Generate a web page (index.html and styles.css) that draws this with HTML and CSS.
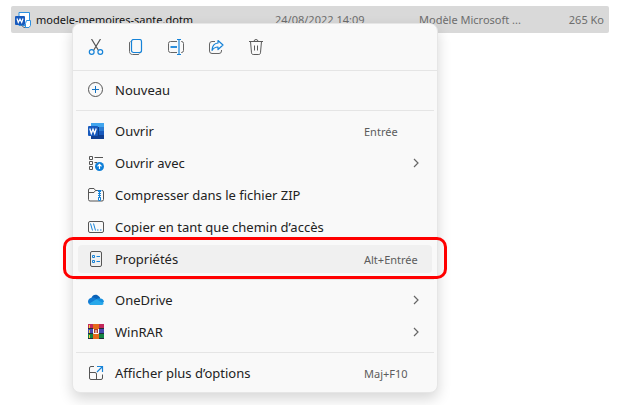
FILE: index.html
```html
<!DOCTYPE html>
<html lang="fr">

<head>
    <meta charset="UTF-8">
    <meta name="viewport" content="width=device-width, initial-scale=1.0">
    <title>Explorateur</title>
    <link rel="stylesheet" href="styles.css">
</head>

<body>
    <main class="explorer">
        <table class="files">
            <tbody>
                <tr>
                    <td class="file-name">
                        <div class="file-label">
                            <svg class="icon" viewBox="0 0 16 16">
                                <path d="M4 4V.5h10.500v13H4V11" fill="#fff" stroke="#2b8fe0" />
                                <path d="M5 12l4 3.500h5" fill="none" stroke="#5b6b80" />
                                <rect x="0" y="4" width="10" height="9" rx="1" fill="#185abd" />
                                <path d="M2 6.500l1.300 4L5 7l1.700 3.500L8 6.500" fill="none" stroke="#fff" stroke-width="1.200" />
                                <path d="M11.500 8.500h4v5l-1.500 2h-3.500v-4z" fill="#fff" stroke="#2b8fe0" />
                            </svg>
                            modele-memoires-sante.dotm
                        </div>
                    </td>
                    <td class="file-date">24/08/2022 14:09</td>
                    <td class="file-type">Modèle Microsoft ...</td>
                    <td class="file-size">265 Ko</td>
                </tr>
            </tbody>
        </table>

        <div class="menu">
            <div class="toolbar">
                <button class="tool" aria-label="Couper">
                    <svg class="icon" viewBox="0 0 16 16" fill="none">
                        <path d="M3.500 0l6.700 11M12.500 0L5.800 11" stroke="#555" stroke-width="1.200" />
                        <circle cx="3.700" cy="13" r="2.400" stroke="#1683d8" stroke-width="1.200" />
                        <circle cx="12.300" cy="13" r="2.400" stroke="#1683d8" stroke-width="1.200" />
                    </svg>
                </button>
                <button class="tool" aria-label="Copier">
                    <svg class="icon" viewBox="0 0 16 16" fill="none">
                        <path d="M2.500 2.500c-.7.300-1 .8-1 1.500v8.500c0 1.800 1.200 3 3 3H10c.8 0 1.300-.4 1.700-1" stroke="#666" />
                        <rect x="3.500" y=".5" width="10" height="13" rx="2" stroke="#1683d8" stroke-width="1.200" />
                    </svg>
                </button>
                <button class="tool" aria-label="Renommer">
                    <svg class="icon" viewBox="0 0 16 16" fill="none">
                        <path d="M9 2.500H2.500a2 2 0 0 0-2 2v7a2 2 0 0 0 2 2H9M13 2.500h.5a2 2 0 0 1 2 2v7a2 2 0 0 1-2 2H13" stroke="#666" />
                        <path d="M2.500 8H9" stroke="#1683d8" stroke-width="1.800" />
                        <path d="M9 .5h4M9 15.500h4M11 .5v15" stroke="#1683d8" stroke-width="1.200" />
                    </svg>
                </button>
                <button class="tool" aria-label="Partager">
                    <svg class="icon" viewBox="0 0 16 16" fill="none">
                        <path d="M7 2.500H4a2.500 2.500 0 0 0-2.500 2.500v7A2.500 2.500 0 0 0 4 14.500h7a2.500 2.500 0 0 0 2.500-2.500v-1" stroke="#666" />
                        <path d="M10 1.500L15 6l-5 4.500V8C7 8 5.500 9 4 11.300 4.200 7 6.500 4.300 10 4z" stroke="#1683d8" stroke-width="1.200" stroke-linejoin="round" />
                    </svg>
                </button>
                <button class="tool" aria-label="Supprimer">
                    <svg class="icon" viewBox="0 0 16 16" fill="none" stroke="#5a5a5a">
                        <path d="M1 2.500h14M6 2.500a2 2 0 0 1 4 0M2.500 2.500l1 11.300c.1 1 .7 1.700 1.700 1.700h5.600c1 0 1.600-.7 1.700-1.700l1-11.300M6.500 6.500v5M9.500 6.500v5" />
                    </svg>
                </button>
            </div>

            <button class="item">
                <svg class="icon" viewBox="0 0 16 16" fill="none">
                    <circle cx="7.500" cy="7.500" r="7" stroke="#555" />
                    <path d="M7.500 4v7M4 7.500h7" stroke="#1473c4" />
                </svg>
                <span class="label">Nouveau</span>
            </button>

            <hr class="separator">

            <button class="item">
                <svg class="icon" viewBox="0 0 16 16">
                    <path d="M3 0h13v4H3z" fill="#41a5ee" />
                    <path d="M3 4h13v4H3z" fill="#2b7cd3" />
                    <path d="M3 8h13v4H3z" fill="#185abd" />
                    <path d="M3 12h13v4H3z" fill="#103f91" />
                    <path d="M3 4h8v9H3z" fill="#0e3d85" />
                    <rect x="0" y="3" width="10" height="10" rx="1" fill="#185abd" />
                    <path d="M1.800 5.500l1.500 5L5 6.200l1.700 4.300 1.500-5" fill="none" stroke="#fff" stroke-width="1.300" />
                </svg>
                <span class="label">Ouvrir</span>
                <span class="shortcut">Entrée</span>
            </button>
            <button class="item">
                <svg class="icon" viewBox="0 0 16 16" fill="none">
                    <path d="M1.500 1.500h3v3h-3zM1.500 6.500h3v3h-3zM1.500 11.500h3v3h-3zM6.500 2.500H15M6.500 7.500H9" stroke="#555" />
                    <circle cx="11.500" cy="11.500" r="4.500" fill="#0f7fd8" />
                    <path d="M11.500 14V9.500M9.500 11.300l2-2 2 2" stroke="#fff" stroke-width="1.200" />
                </svg>
                <span class="label">Ouvrir avec</span>
                <svg class="chevron" viewBox="0 0 6 10"><path d="M1 1l4 4-4 4" /></svg>
            </button>
            <button class="item">
                <svg class="icon" viewBox="0 0 16 16" fill="none">
                    <path d="M10 3.500H7.500L6 1.500H2A1.500 1.500 0 0 0 .5 3v9.500A1.500 1.500 0 0 0 2 14h12a1.500 1.500 0 0 0 1.500-1.500V5A1.500 1.500 0 0 0 14 3.500M.5 5.500H6l1.500-2" stroke="#555" />
                    <path d="M9.500 3.500h4M11.500 3v11" stroke="#1683d8" />
                    <path d="M11.500 4v7" stroke="#1683d8" stroke-width="3" stroke-dasharray="1 1" />
                    <path d="M10.500 10.500h2v3h-2z" fill="#fff" stroke="#1683d8" />
                </svg>
                <span class="label">Compresser dans le fichier ZIP</span>
            </button>
            <button class="item">
                <svg class="icon" viewBox="0 0 16 16" fill="none">
                    <rect x=".5" y="2.500" width="15" height="11" rx="1.500" stroke="#555" />
                    <path d="M2.500 4.500l2 7M5.500 4.500l2 7M9 11h1.500M12 11h1.500" stroke="#1683d8" />
                </svg>
                <span class="label">Copier en tant que chemin d’accès</span>
            </button>
            <button class="item item-active">
                <svg class="icon" viewBox="0 0 16 16" fill="none">
                    <rect x="2.500" y=".5" width="11" height="15" rx="1.500" stroke="#555" />
                    <path d="M4.500 4.500h2v2h-2zM4.500 9.500h2v2h-2zM8.500 5.500H12M8.500 10.500H12" stroke="#1683d8" />
                </svg>
                <span class="label">Propriétés</span>
                <span class="shortcut">Alt+Entrée</span>
            </button>

            <hr class="separator">

            <button class="item">
                <svg class="icon" viewBox="0 0 16 16">
                    <path d="M3.500 6C4.500 3 7 2 9.500 3.200 11 4 12 5 12.300 6.500L8 10z" fill="#0a62b8" />
                    <path d="M3.500 5.700c2-.5 3.500.2 5 1.300L3 13C1 12.500 0 11.200 0 9.500c0-2 1.500-3.500 3.500-3.800z" fill="#127bd3" />
                    <path d="M8 7.500c1.200-1 2.700-1.400 4.200-1.100C14.500 6.500 16 8 16 10l-3 2z" fill="#1490df" />
                    <path d="M1 11.800l7.300-4.600 7.400 4.300c-.5 1-1.300 1.500-2.700 1.500H3.500c-1 0-1.900-.5-2.500-1.200z" fill="#28a8ea" />
                </svg>
                <span class="label">OneDrive</span>
                <svg class="chevron" viewBox="0 0 6 10"><path d="M1 1l4 4-4 4" /></svg>
            </button>
            <button class="item">
                <svg class="icon" viewBox="0 0 16 16">
                    <path d="M0 0h16v5H0z" fill="#c3285a" />
                    <path d="M0 5h16v5H0z" fill="#474ab0" />
                    <path d="M0 10h16v5H0z" fill="#148543" />
                    <path d="M0 4.500h16M0 9.500h16M0 14.500h16" stroke="#222c3c" />
                    <path d="M1.500 1v3M1.500 6v3M1.500 11v3" stroke="#efcb42" />
                    <path d="M5 0h6v5H5zM5 10h6v5H5z" fill="#e56a1c" />
                    <path d="M5 5h6v5H5z" fill="#b0402c" />
                    <path d="M5.500 5v4.500h5V5M8 6v3" fill="none" stroke="#fff" />
                </svg>
                <span class="label">WinRAR</span>
                <svg class="chevron" viewBox="0 0 6 10"><path d="M1 1l4 4-4 4" /></svg>
            </button>

            <hr class="separator">

            <button class="item">
                <svg class="icon" viewBox="0 0 16 16" fill="none">
                    <path d="M6 1.500H3A1.500 1.500 0 0 0 1.500 3v10A1.500 1.500 0 0 0 3 14.500h10a1.500 1.500 0 0 0 1.500-1.500V9.500M1.500 7.500H7A1.500 1.500 0 0 1 8.500 9v5.500" stroke="#555" />
                    <path d="M9 1.500h5.500V7M14.500 1.500L9 7" stroke="#1683d8" stroke-width="1.200" />
                </svg>
                <span class="label">Afficher plus d’options</span>
                <span class="shortcut">Maj+F10</span>
            </button>
        </div>
    </main>
</body>

</html>
```
FILE: styles.css
```css
* {
    box-sizing: border-box;
    margin: 0;
    padding: 0;
}

body {
    background: #fff;
    font-family: "Noto Sans", "Open Sans", sans-serif;
}

.explorer {
    position: relative;
    min-height: 100vh;
    padding: 6px 19px 0 11px;
}

.icon {
    display: block;
    flex: none;
    width: 16px;
    height: 16px;
}

/* file list */

.files {
    width: 100%;
    table-layout: fixed;
    border-collapse: collapse;
    background: #d9d9d9;
    border-radius: 2px;
    font-size: 11px;
    line-height: 27px;
    color: #6d6d6d;
    white-space: nowrap;
}

.file-name {
    width: 264px;
    padding-left: 4px;
    color: #111;
}

.file-label {
    display: flex;
    align-items: center;
    gap: 5px;
}

.file-date {
    width: 144px;
}

.file-type {
    width: 120px;
}

.file-size {
    padding-right: 5px;
    text-align: right;
}

/* context menu */

.menu {
    position: absolute;
    top: 23px;
    left: 72px;
    display: flex;
    flex-direction: column;
    min-width: 366px;
    padding-bottom: 3px;
    background: #f9f9f9;
    border: 1px solid #e6e6e6;
    border-radius: 8px;
    box-shadow: 0 6px 14px rgba(0, 0, 0, 0.16);
}

.toolbar {
    display: flex;
    height: 47px;
    margin-bottom: 3px;
    padding-left: 3px;
    border-bottom: 1px solid #e5e5e5;
}

.tool {
    display: flex;
    align-items: center;
    justify-content: center;
    width: 40px;
    background: none;
    border: none;
}

.item {
    position: relative;
    display: flex;
    align-items: center;
    height: 28px;
    margin: 2px 5px;
    padding-left: 10px;
    background: none;
    border: none;
    border-radius: 4px;
    font-family: inherit;
    font-size: 13px;
    color: #222;
    text-align: left;
}

.label {
    flex: 1;
    margin-left: 11px;
    white-space: nowrap;
}

.shortcut {
    width: 68px;
    font-size: 11px;
    color: #5c5c5c;
}

.chevron {
    width: 6px;
    height: 10px;
    margin-right: 13px;
    fill: none;
    stroke: #666;
    stroke-width: 1.2;
}

.separator {
    height: 1px;
    margin: 4px 3px;
    background: #e5e5e5;
    border: none;
}

.item-active {
    background: #f0f0f0;
}

.item-active::after {
    content: "";
    position: absolute;
    inset: -8px -15px -6px;
    border: 3px solid #f00;
    border-radius: 10px;
}
```
